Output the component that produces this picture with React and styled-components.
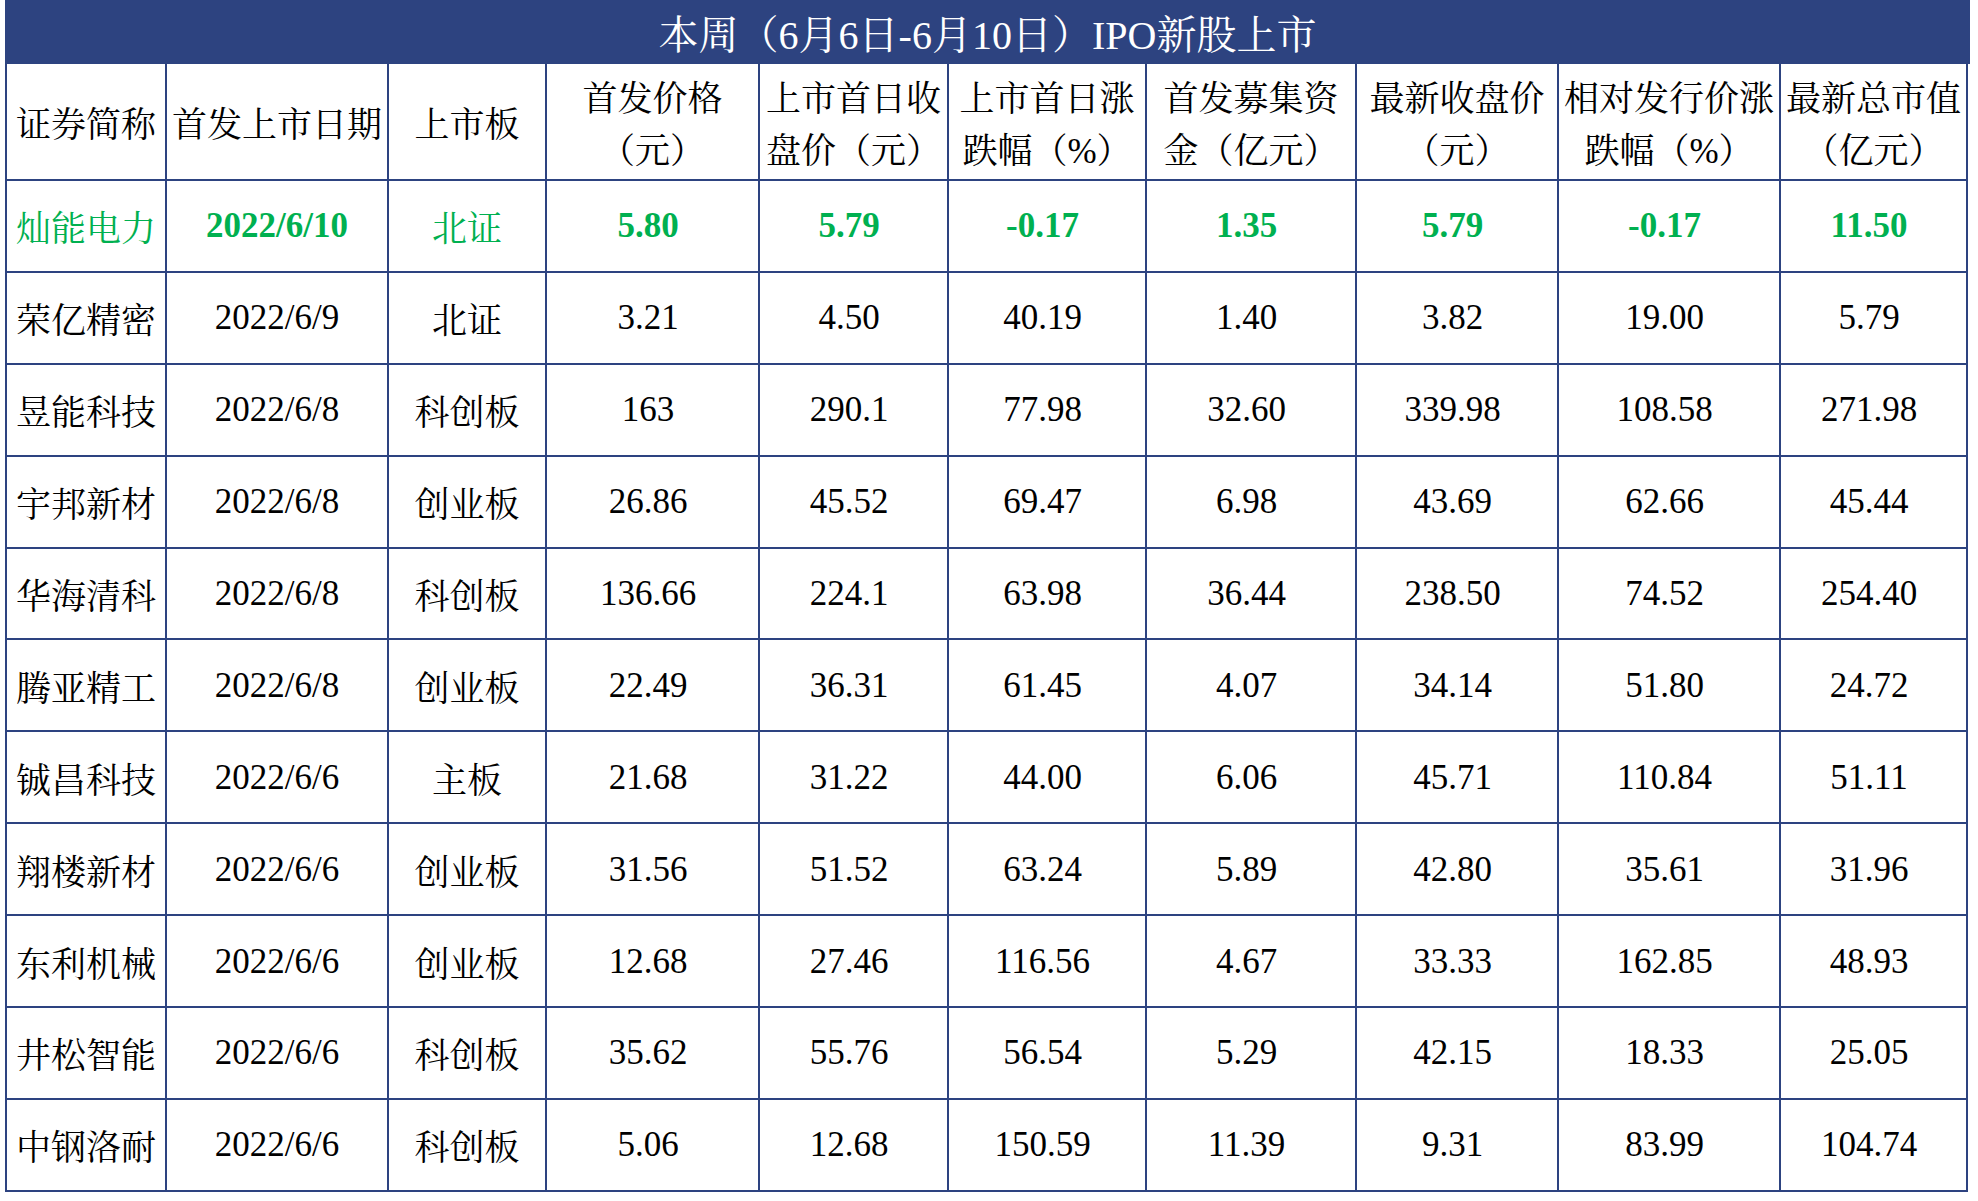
import React from "react";
import styled, { createGlobalStyle } from "styled-components";

const GlobalStyle = createGlobalStyle`
  html, body {
    margin: 0;
    padding: 0;
    background: #ffffff;
  }
  body {
    font-family: "Liberation Serif", "Noto Serif CJK SC", "Noto Sans CJK SC", serif;
  }
`;

const NAVY = "#2d4380";
const GREEN = "#00b050";

const COLS = [158, 220, 156, 211, 187, 196, 208, 200, 220, 185];

const Page = styled.div`
  padding-left: 5px;
  width: 1963px;
`;

const TitleBar = styled.div`
  height: 64px;
  width: 1965px;
  background: ${NAVY};
  color: #ffffff;
  display: flex;
  align-items: center;
  justify-content: center;
  font-size: 40px;
  padding-bottom: 1px;
  box-sizing: border-box;
`;

const Grid = styled.div`
  display: grid;
  grid-template-columns: ${COLS.map((c) => `${c}px`).join(" ")};
  grid-template-rows: 115px;
  grid-auto-rows: 89.9px;
  column-gap: 2px;
  row-gap: 2px;
  background: ${NAVY};
  padding: 0 2px 2px 2px;
  width: max-content;
`;

const Cell = styled.div`
  background: #ffffff;
  display: flex;
  align-items: center;
  justify-content: center;
  text-align: center;
  font-size: 35px;
  color: ${(p) => (p.$highlight ? GREEN : "#000000")};
  font-weight: ${(p) => (p.$bold ? 700 : 400)};
  white-space: nowrap;
  padding-top: 1px;
  padding-right: ${(p) => (p.$shift ? "9px" : "0")};
  box-sizing: border-box;
`;

const HeaderCell = styled(Cell)`
  flex-direction: column;
  line-height: 52px;
  padding-top: 8px;
  padding-right: 0;
`;

const HeaderLine = styled.span`
  display: block;
`;

const headers = [
  ["证券简称"],
  ["首发上市日期"],
  ["上市板"],
  ["首发价格", "（元）"],
  ["上市首日收", "盘价（元）"],
  ["上市首日涨", "跌幅（%）"],
  ["首发募集资", "金（亿元）"],
  ["最新收盘价", "（元）"],
  ["相对发行价涨", "跌幅（%）"],
  ["最新总市值", "（亿元）"],
];

const rows = [
  ["灿能电力", "2022/6/10", "北证", "5.80", "5.79", "-0.17", "1.35", "5.79", "-0.17", "11.50"],
  ["荣亿精密", "2022/6/9", "北证", "3.21", "4.50", "40.19", "1.40", "3.82", "19.00", "5.79"],
  ["昱能科技", "2022/6/8", "科创板", "163", "290.1", "77.98", "32.60", "339.98", "108.58", "271.98"],
  ["宇邦新材", "2022/6/8", "创业板", "26.86", "45.52", "69.47", "6.98", "43.69", "62.66", "45.44"],
  ["华海清科", "2022/6/8", "科创板", "136.66", "224.1", "63.98", "36.44", "238.50", "74.52", "254.40"],
  ["腾亚精工", "2022/6/8", "创业板", "22.49", "36.31", "61.45", "4.07", "34.14", "51.80", "24.72"],
  ["铖昌科技", "2022/6/6", "主板", "21.68", "31.22", "44.00", "6.06", "45.71", "110.84", "51.11"],
  ["翔楼新材", "2022/6/6", "创业板", "31.56", "51.52", "63.24", "5.89", "42.80", "35.61", "31.96"],
  ["东利机械", "2022/6/6", "创业板", "12.68", "27.46", "116.56", "4.67", "33.33", "162.85", "48.93"],
  ["井松智能", "2022/6/6", "科创板", "35.62", "55.76", "56.54", "5.29", "42.15", "18.33", "25.05"],
  ["中钢洛耐", "2022/6/6", "科创板", "5.06", "12.68", "150.59", "11.39", "9.31", "83.99", "104.74"],
];

const isNumeric = (s) => /^[-0-9./]+$/.test(s);

export default function App() {
  return (
    <>
      <GlobalStyle />
      <Page>
        <TitleBar>本周（6月6日-6月10日）IPO新股上市</TitleBar>
        <Grid>
          {headers.map((lines, i) => (
            <HeaderCell key={`h${i}`}>
              {lines.map((l, j) => (
                <HeaderLine key={j}>{l}</HeaderLine>
              ))}
            </HeaderCell>
          ))}
          {rows.map((row, r) =>
            row.map((v, c) => (
              <Cell
                key={`${r}-${c}`}
                $highlight={r === 0}
                $bold={r === 0 && isNumeric(v)}
                $shift={c >= 3}
              >
                {v}
              </Cell>
            ))
          )}
        </Grid>
      </Page>
    </>
  );
}
